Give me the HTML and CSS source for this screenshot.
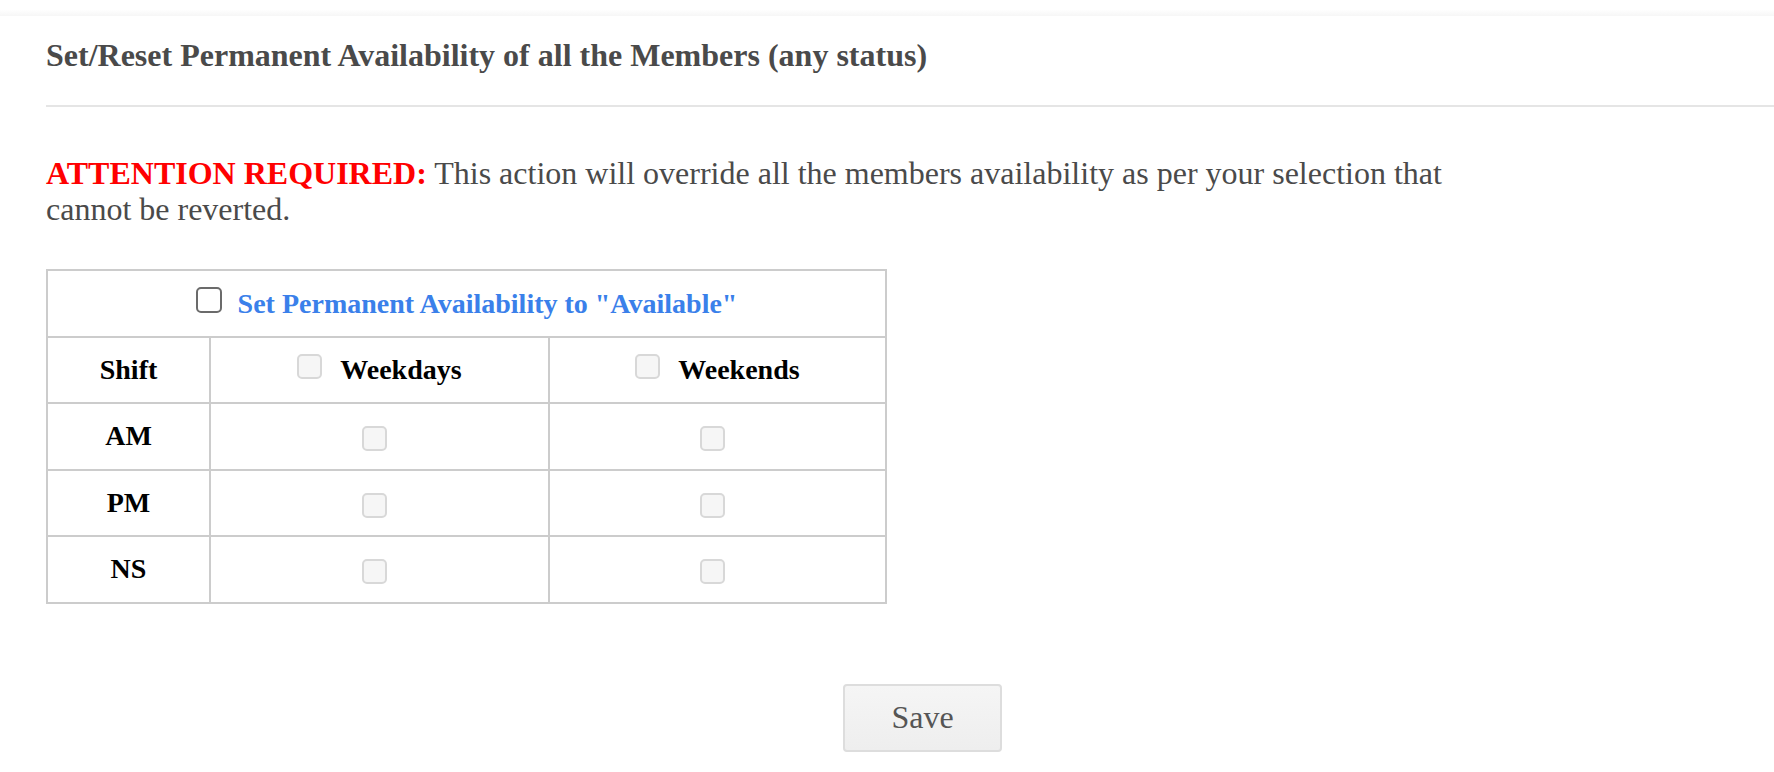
FILE: index.html
```html
<!DOCTYPE html>
<html lang="en">
<head>
<meta charset="utf-8">
<title>Set/Reset Permanent Availability</title>
<link rel="stylesheet" href="styles.css">
</head>
<body>
<div class="topbar"></div>
<main class="panel">
  <h2 class="title">Set/Reset Permanent Availability of all the Members (any status)</h2>
  <hr class="rule">
  <p class="notice"><strong class="alert">ATTENTION REQUIRED:</strong> This action will override all the members availability as per your selection that cannot be reverted.</p>
  <table class="avail">
    <colgroup>
      <col class="c-shift">
      <col class="c-day">
      <col class="c-end">
    </colgroup>
    <tbody>
      <tr>
        <td colspan="3" class="all-cell"><label class="all-label"><input type="checkbox" class="cb cb-main"><span>Set Permanent Availability to "Available"</span></label></td>
      </tr>
      <tr>
        <th>Shift</th>
        <th><label class="head-label"><input type="checkbox" class="cb cb-off cb-head" disabled><span>Weekdays</span></label></th>
        <th><label class="head-label"><input type="checkbox" class="cb cb-off cb-head" disabled><span>Weekends</span></label></th>
      </tr>
      <tr>
        <th>AM</th>
        <td><input type="checkbox" class="cb cb-off cb-cell" disabled></td>
        <td><input type="checkbox" class="cb cb-off cb-cell" disabled></td>
      </tr>
      <tr>
        <th>PM</th>
        <td><input type="checkbox" class="cb cb-off cb-cell" disabled></td>
        <td><input type="checkbox" class="cb cb-off cb-cell" disabled></td>
      </tr>
      <tr>
        <th>NS</th>
        <td><input type="checkbox" class="cb cb-off cb-cell" disabled></td>
        <td><input type="checkbox" class="cb cb-off cb-cell" disabled></td>
      </tr>
    </tbody>
  </table>
  <div class="actions">
    <button type="button" class="save">Save</button>
  </div>
</main>
</body>
</html>
```

FILE: styles.css
```css
html, body {
  margin: 0;
  padding: 0;
  background: #ffffff;
}

body {
  font-family: "Liberation Serif", "Times New Roman", serif;
  color: #494949;
  overflow: hidden;
}

.topbar {
  height: 16px;
  background: linear-gradient(to bottom, #ffffff 0%, #ffffff 60%, #f6f6f6 100%);
}

.panel {
  padding: 0 0 0 46px;
}

.title {
  margin: 21px 0 0 0;
  font-size: 32px;
  line-height: 36px;
  font-weight: bold;
  color: #4a4a4a;
}

.rule {
  margin: 32px 0 0 0;
  border: 0;
  border-top: 2px solid #e5e5e5;
  height: 0;
}

.notice {
  margin: 48px 0 0 0;
  width: 1420px;
  font-size: 32px;
  line-height: 36px;
  color: #4a4a4a;
}

.alert {
  color: #ff0000;
  font-weight: bold;
}

.avail {
  margin-top: 42px;
  border-collapse: collapse;
  table-layout: fixed;
  width: 839px;
  font-size: 28px;
  color: #000000;
}

.c-shift { width: 163px; }
.c-day { width: 339px; }
.c-end { width: 337px; }

.avail td,
.avail th {
  border: 2px solid #cccccc;
  height: 64.5px;
  padding: 0;
  text-align: center;
  vertical-align: middle;
  font-weight: bold;
  line-height: 32px;
}

.all-label {
  color: #3a80ea;
  font-weight: bold;
  cursor: pointer;
}

.head-label {
  font-weight: bold;
}

.cb {
  -webkit-appearance: none;
  appearance: none;
  box-sizing: border-box;
  margin: 0;
  padding: 0;
  border-radius: 5px;
  vertical-align: baseline;
  display: inline-block;
}

.cb-main {
  width: 26px;
  height: 26px;
  border: 2px solid #6b6b6b;
  background: #ffffff;
  margin-right: 16px;
}

.cb-off {
  width: 25px;
  height: 25px;
  border: 2px solid #d8d8d8;
  background: #f6f6f6;
}

.cb-head {
  margin-right: 18px;
}

.cb-cell {
  margin-right: 10px;
  vertical-align: middle;
}

.actions {
  margin-top: 80px;
  padding-left: 797px;
}

.save {
  width: 159px;
  height: 68px;
  box-sizing: border-box;
  border: 2px solid #dddddd;
  border-radius: 4px;
  background: linear-gradient(to bottom, #f5f5f5 0%, #eeeeee 100%);
  font-family: "Liberation Serif", "Times New Roman", serif;
  font-size: 32px;
  color: #555555;
  padding: 0;
  cursor: pointer;
}
```
